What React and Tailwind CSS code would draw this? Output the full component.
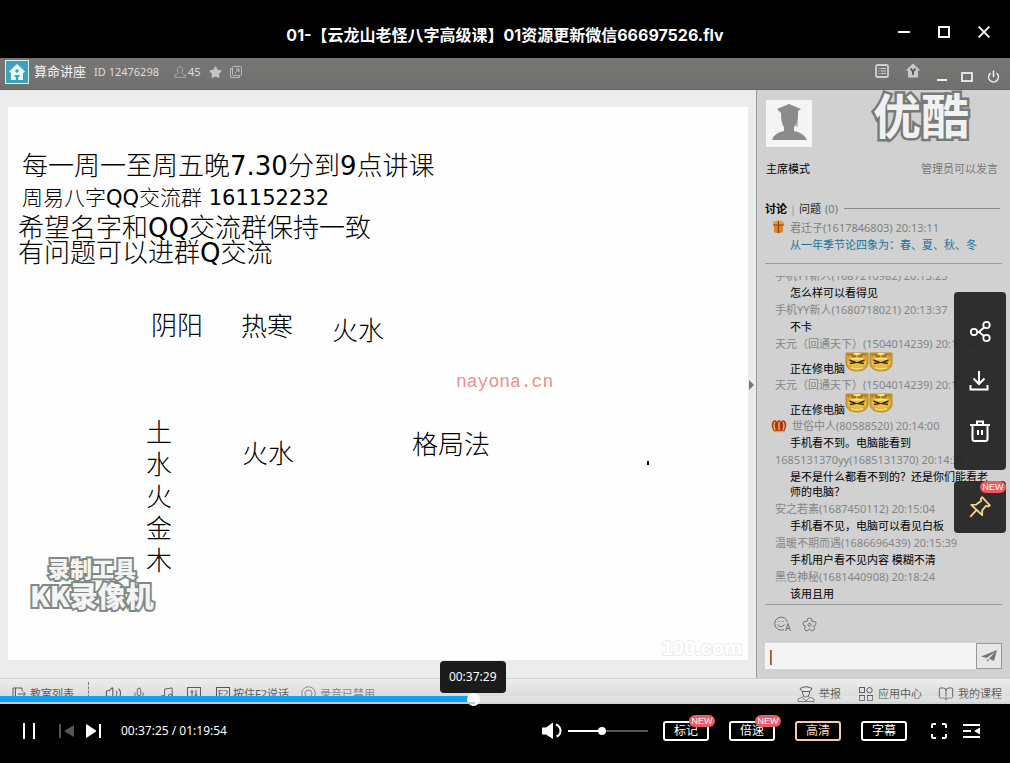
import React from 'react';
import { Minus, Power, Volume2, Mic, Music, Star, BookOpen } from 'lucide-react';

const cjk = "font-['Noto_Sans','Noto_Sans_CJK_SC',sans-serif]";

const notes = [
  { text: '每一周一至周五晚7.30分到9点讲课', cls: 'left-[14px] top-[43px] text-[26px]' },
  { text: '周易八字QQ交流群 161152232', cls: 'left-[14px] top-[75px] text-[21px]' },
  { text: '希望名字和QQ交流群保持一致', cls: 'left-[10px] top-[105px] text-[26px]' },
  { text: '有问题可以进群Q交流', cls: 'left-[10px] top-[130px] text-[26px]' },
  { text: '阴阳', cls: 'left-[143px] top-[203px] text-[26px]' },
  { text: '热寒', cls: 'left-[233px] top-[204px] text-[26px]' },
  { text: '火水', cls: 'left-[324px] top-[208px] text-[26px]' },
  { text: '火水', cls: 'left-[234px] top-[331px] text-[26px]' },
  { text: '格局法', cls: 'left-[404px] top-[322px] text-[26px]' },
];

const messages = [
  { name: '手机YY新人(1687210982) 20:13:23', text: '怎么样可以看得见' },
  { name: '手机YY新人(1680718021) 20:13:37', text: '不卡' },
  { name: '天元（回通天下）(1504014239) 20:13:42', text: '正在修电脑', faces: 2 },
  { name: '天元（回通天下）(1504014239) 20:13:52', text: '正在修电脑', faces: 2 },
  { name: '世俗中人(80588520) 20:14:00', text: '手机看不到。电脑能看到', crown: true },
  { name: '1685131370yy(1685131370) 20:14:38', text: '是不是什么都看不到的？还是你们能看老师的电脑？' },
  { name: '安之若素(1687450112) 20:15:04', text: '手机看不见，电脑可以看见白板' },
  { name: '温暖不期而遇(1686696439) 20:15:39', text: '手机用户看不见内容 模糊不清' },
  { name: '黑色神秘(1681440908) 20:18:24', text: '该用且用' },
];

function Face() {
  return (
    <svg width="24" height="20" viewBox="0 0 24 20" className="shrink-0">
      <path d="M1 1 H23 V12 Q21.500 19 12 19 Q2.500 19 1 12 Z" fill="#d9a22c" stroke="#b98a2c" />
      <path d="M1.500 1.500 H6 L3 5 Z M22.500 1.500 H18 L21 5 Z" fill="#b88426" />
      <path d="M6 2 L9 5 L12 3 L15 5 L18 2" stroke="#8a5e16" strokeWidth="1.400" fill="none" />
      <path d="M8 1 H16 L12 4 Z" fill="#fbe98a" />
      <ellipse cx="12" cy="10.500" rx="9.500" ry="5" fill="#e9bd45" />
      <path d="M4 6.500 Q12 4.500 20 6.500 L18 8 L12 7.500 L6 8 Z" fill="#f8e07c" />
      <path d="M4.500 8 L10.500 10.500 L5 11.500 M19.500 8 L13.500 10.500 L19 11.500" stroke="#3a280b" strokeWidth="1.500" fill="none" />
      <path d="M6 15.500 Q12 18 18 15.500" fill="none" stroke="#f6dc78" strokeWidth="1.800" />
    </svg>
  );
}

function Crown() {
  return (
    <svg width="16" height="14" viewBox="0 0 16 14" className="mr-[5px] shrink-0">
      <path d="M3 13 Q-1 6 2 2 Q5 0 6 3 Q8 -1 10 3 Q11 0 14 2 Q17 6 13 13 Z" fill="#b3321c" />
      <path d="M4 11 Q2 6 4 3 M8 11 V3 M12 11 Q14 6 12 3" stroke="#f2c15a" strokeWidth="1.3" fill="none" />
      <path d="M3 12.5 H13" stroke="#e8a13c" strokeWidth="1.5" />
    </svg>
  );
}

function Message({ m }) {
  return (
    <li>
      <p className="flex h-[17px] items-center whitespace-nowrap text-[#858585]">
        {m.crown && <span className="-ml-1"><Crown /></span>}
        {m.name}
      </p>
      {m.faces ? (
        <p className="flex h-6 items-end pl-[15px] text-black">
          <span className="leading-[15px]">{m.text}</span>
          <span className="flex self-start">{Array.from({ length: m.faces }, (_, i) => <Face key={i} />)}</span>
        </p>
      ) : (
        <p className="w-[215px] py-px pl-[15px] leading-[15px] text-black">{m.text}</p>
      )}
    </li>
  );
}

function NewBadge({ className }) {
  return (
    <span className={`absolute flex h-3 w-[26px] items-center justify-center rounded-full bg-[#ee5a60] font-['Liberation_Sans',sans-serif] text-[9px] leading-none text-white ${className}`}>
      NEW
    </span>
  );
}

function TitleBar() {
  return (
    <header className="relative flex h-[58px] items-center justify-center pt-3 text-white">
      <h1 className="font-['Inter','Noto_Sans_CJK_SC',sans-serif] text-base font-bold">01-【云龙山老怪八字高级课】01资源更新微信66697526.flv</h1>
      <div className="absolute right-4 top-[22px] flex gap-5">
        <button aria-label="最小化" className="flex size-5 items-center justify-center"><Minus size={18} strokeWidth={2.6} /></button>
        <button aria-label="最大化" className="flex size-5 items-center justify-center">
          <svg width="12" height="12" viewBox="0 0 12 12"><rect x="1" y="1" width="10" height="10" fill="none" stroke="currentColor" strokeWidth="2" /></svg>
        </button>
        <button aria-label="关闭" className="flex size-5 items-center justify-center">
          <svg width="12" height="12" viewBox="0 0 12 12"><path d="M0.7 0.7 L11.3 11.3 M11.3 0.7 L0.7 11.3" stroke="currentColor" strokeWidth="1.8" /></svg>
        </button>
      </div>
    </header>
  );
}

function RoomBar() {
  return (
    <div className="flex h-8 items-start justify-between border-b border-[#666] bg-linear-to-b from-[#797776] to-[#70706f] pl-[5px] pr-[10px] text-[#dcdcdc]">
      <div className="flex h-7 items-center text-[11px]">
        <span className="flex size-6 items-center justify-center border border-[#d3f0f5] bg-[#3fa3b8]">
          <svg width="18" height="18" viewBox="0 0 18 18"><path d="M9 1 L17 8.5 L15.5 10 L15 9.6 V17 H3 V9.6 L2.5 10 L1 8.5 Z" fill="#eefcff" /><circle cx="9" cy="8" r="1.8" fill="#3fa3b8" /><path d="M6.5 12 H11.5 V14 H10.2 V17 H7.8 V14 H6.5 Z" fill="#3fa3b8" /></svg>
        </span>
        <span className="ml-[5px] text-[13px] text-[#f3f3f3]">算命讲座</span>
        <span className="ml-2">ID 12476298</span>
        <svg className="ml-[15px] text-[#aaa]" width="12" height="12" viewBox="0 0 12 12" fill="none" stroke="currentColor"><path d="M4.5 6.5 Q3 5 3.3 3 Q4 .7 6 .7 Q8 .7 8.7 3 Q9 5 7.5 6.5 Q8 8 11.3 9 V11.3 H.7 V9 Q4 8 4.5 6.5 Z" /></svg>
        <span className="ml-[2px]">45</span>
        <Star className="ml-2 text-[#c4c4c4]" size={13} fill="currentColor" />
        <svg className="ml-2 text-[#bcbcbc]" width="12" height="12" viewBox="0 0 12 12" fill="none" stroke="currentColor"><rect x="2.5" y=".5" width="9" height="9" rx="1" /><path d="M2.5 2.5 H.5 V11.5 H9.5 V9.5 M5 7 L9 3 M6 3 H9 V6" /></svg>
      </div>
      <div className="flex h-[31px] items-center">
        <svg className="mb-[6px]" width="14" height="14" viewBox="0 0 14 14" fill="none" stroke="#d0d0d0"><rect x="1" y="1" width="12" height="12" rx="1.500" strokeWidth="1.8" /><path d="M5.500 4.5 H11 M5.500 7 H11 M5.500 9.5 H11 M3.500 4.500 H4.500 M3.500 7 H4.500 M3.500 9.500 H4.500" /></svg>
        <svg className="mb-[6px] ml-4" width="16" height="15" viewBox="0 0 16 15"><path d="M8 .5 L15.5 7.5 H13 V14.5 H3 V7.5 H.5 Z" fill="#c9c9c9" /><path d="M5.5 5.5 L8 8.5 L10.5 5.5 M8 8.5 V12" stroke="#555" strokeWidth="1.8" fill="none" /></svg>
        <svg className="ml-4 mt-[6px]" width="10" height="12" viewBox="0 0 10 12"><path d="M0 9 H10" stroke="#eee" strokeWidth="2" /></svg>
        <svg className="ml-[14px] mt-[6px]" width="12" height="10" viewBox="0 0 12 10"><rect x="1" y="1" width="10" height="8" fill="none" stroke="#eee" strokeWidth="1.8" /></svg>
        <Power className="ml-[14px] mt-[6px] text-[#eee]" size={13} strokeWidth={2.8} />
      </div>
    </div>
  );
}

function Note({ text }) {
  return text.split(/([\x21-\x7e]+)/).map((part, i) =>
    i % 2 ? <span key={i} className="font-normal">{part}</span> : part
  );
}

function Whiteboard() {
  return (
    <main className="relative flex flex-1 bg-[#ebecec] px-2 pb-[18px] pt-[17px]">
      <div className="relative flex-1 overflow-hidden bg-[#fdfefd] font-['DejaVu_Sans','Noto_Sans_CJK_SC',sans-serif] font-light text-black">
        {notes.map((n, i) => (
          <p key={i} className={`absolute whitespace-nowrap leading-8 ${n.cls}`}><Note text={n.text} /></p>
        ))}
        <p className="absolute left-[138px] top-[310px] w-[26px] text-[26px] leading-8">土水火金木</p>
        <p className="absolute left-[448px] top-[263px] font-['Liberation_Mono',monospace] text-lg leading-6 text-[#ee8f8f]">nayona.cn</p>
        <span className="absolute left-[639px] top-[354px] h-1 w-[2px] bg-black" />
        <div className="absolute left-[22px] top-[446px] font-['Noto_Sans_CJK_SC',sans-serif] font-black text-[#f4f4f4] [-webkit-text-stroke:4px_#818985] [paint-order:stroke_fill]">
          <p className="pl-[18px] text-[22px] leading-7">录制工具</p>
          <p className="text-[28px] leading-7">KK录像机</p>
        </div>
        <p className="absolute bottom-0 right-[6px] font-['Liberation_Sans',sans-serif] text-xl font-bold leading-6 text-white [-webkit-text-stroke:2px_#ececec] [paint-order:stroke_fill]">100.com</p>
      </div>
      <svg className="absolute right-[2px] top-[290px]" width="5" height="10" viewBox="0 0 5 10"><path d="M0 0 L5 5 L0 10 Z" fill="#777" /></svg>
    </main>
  );
}

function ChatPanel() {
  return (
    <aside className="flex w-[254px] shrink-0 flex-col border-l border-[#999b99] bg-[#d0d1d0] px-2 text-[11px] leading-[17px]">
      <div className="flex items-start justify-between pl-px pr-[33px] pt-[10px]">
        <svg width="46" height="47" viewBox="0 0 46 47"><rect width="46" height="47" fill="#f4f4f4" /><path d="M23 4 L35 9 L32 11 V16 Q31 25 28 27 V31 Q38 33 41 40 H6 Q8 33 18 31 V27 Q15 24 15 13 L11 9 Z" fill="#8b8b8b" /><path d="M31 10 V27" stroke="#8b8b8b" /></svg>
        <p className="-mt-[11px] font-['Noto_Sans_CJK_SC',sans-serif] text-5xl font-bold leading-[48px] text-[#f1f1f1] [-webkit-text-stroke:5px_#77797a] [paint-order:stroke_fill]">优酷</p>
      </div>
      <div className="mt-[13px] flex justify-between pl-px pr-1">
        <span className="text-black">主席模式</span>
        <span className="text-[#777]">管理员可以发言</span>
      </div>
      <div className="mt-[23px] flex items-center">
        <b className="text-black">讨论</b>
        <span className="mx-[3px] text-[#999]">|</span>
        <span className="text-[#222]">问题</span>
        <span className="ml-1 text-[#777]">(0)</span>
        <hr className="ml-[6px] mr-[2px] flex-1 border-[#8a8a8a]" />
      </div>
      <div className="mt-[2px] flex border-b border-[#9b9b9b] pb-[10px] pl-[6px]">
        <svg className="mr-1" width="15" height="15" viewBox="0 0 15 15"><path d="M3 5 H12 V13 Q7 15.5 3 13 Z" fill="#dd8428" /><path d="M2 3 Q7.5 0 13 3 V6 H2 Z" fill="#e99b38" /><path d="M7.5 2 V14 M2 6 H13" stroke="#8b3d12" strokeWidth="1.2" /></svg>
        <div>
          <p className="text-[#808080]">君迁子(1617846803) 20:13:11</p>
          <p className="text-[#17739c]">从一年季节论四象为：春、夏、秋、冬</p>
        </div>
      </div>
      <div className="mt-3 flex-1 overflow-hidden">
        <ul className="-mt-[9px] pl-[10px]">
          {messages.map((m, i) => <Message key={i} m={m} />)}
        </ul>
      </div>
      <div className="flex gap-[10px] border-t border-[#999] pb-[11px] pl-[9px] pt-[11px] text-[#6f6f6f]">
        <button aria-label="表情">
          <svg width="18" height="16" viewBox="0 0 18 16" fill="none" stroke="currentColor"><path d="M10 13.5 A6.5 6.5 0 1 1 13.5 6" /><path d="M3.5 8.5 Q7 13 10.5 8.5 M5 5 V6 M9 5 V6" /><path d="M11.5 15 L14 7.5 L16.5 15 M12.3 12.5 H15.7" /></svg>
        </button>
        <button aria-label="送花">
          <svg width="15" height="15" viewBox="0 0 15 15" fill="none" stroke="currentColor"><path d="M5 4.5 Q4.5 1 7.5 1 Q10.5 1 10 4.5 Q13.5 3.5 14 6 Q14.5 8.5 11.5 9.3 Q13.5 12 11.5 13.5 Q9.5 14.5 7.5 12 Q5.500 14.5 3.5 13.5 Q1.500 12 3.500 9.3 Q.5 8.500 1 6 Q1.500 3.500 5 4.500 Z" /><circle cx="7.5" cy="7.800" r="1.500" /></svg>
        </button>
      </div>
      <div className="mb-[9px] flex h-[26px]">
        <input aria-label="发言内容" defaultValue="|" className="min-w-0 flex-1 bg-[#f3f4f3] pl-[2px] text-sm text-black outline-none" />
        <button aria-label="发送" className="flex w-[26px] items-center justify-center border border-[#999] bg-[#e6e7e6]">
          <svg width="16" height="13" viewBox="0 0 16 13"><path d="M0 6.500 L16 0 L13 11 L8 8.800 L14 2 L5.500 8 Z M6 9 L8 10 L6.500 12 Z" fill="#777" /></svg>
        </button>
      </div>
    </aside>
  );
}

function ToolStrip() {
  return (
    <div className="flex h-[26px] items-center justify-between border-t border-[#cfcfcf] bg-linear-to-b from-[#ededed] to-[#d3d4d4] pl-3 pr-2 pt-1 text-[11px] leading-4 text-[#5d5d5d]">
      <div className="flex items-center">
        <svg width="14" height="14" viewBox="0 0 14 14" fill="none" stroke="currentColor"><path d="M10 4 V1 H1 V13 H10 V10 M3.500 1 V13 M6 7 H13 M11 4.500 L13.500 7 L11 9.500" /></svg>
        <span className="ml-1">教室列表</span>
        <span className="-mt-2 ml-[14px] h-4 border-l border-dashed border-[#777]" />
        <Volume2 className="ml-4" size={17} strokeWidth={1.5} />
        <Mic className="ml-[10px]" size={14} strokeWidth={1.5} />
        <Music className="ml-[13px]" size={15} strokeWidth={1.5} />
        <svg className="ml-[13px]" width="14" height="14" viewBox="0 0 14 14" fill="none" stroke="currentColor"><rect x=".5" y=".5" width="13" height="13" /><path d="M5 3 V11 M9 3 V11 M3.500 5 H6.500 M7.500 8 H10.500" /></svg>
        <span className="ml-[15px] flex size-[14px] items-center justify-center border border-[#555] font-['Liberation_Serif',serif] text-[10px] leading-none">F2</span>
        <span className="ml-[3px]">按住F2说话</span>
        <svg className="ml-3" width="15" height="15" viewBox="0 0 15 15" fill="none" stroke="#888"><circle cx="7.500" cy="7.500" r="6.800" /><circle cx="7.500" cy="7.500" r="3.500" /></svg>
        <span className="ml-1 text-[#888]">录音已禁用</span>
      </div>
      <div className="flex items-center">
        <svg width="18" height="16" viewBox="0 0 18 16" fill="none" stroke="currentColor"><path d="M3 2.500 Q9 -1 15 2.500 L13 5.500 H5 Z M5.500 5.500 Q5 10 9 11 Q13 10 12.500 5.500 M7 10.500 L1 13 V15.500 H17 V13 L11 10.500 M6 12 L9 15 L12 12" /></svg>
        <span className="ml-1">举报</span>
        <svg className="ml-[18px]" width="14" height="14" viewBox="0 0 14 14" fill="none" stroke="currentColor"><rect x=".5" y=".5" width="5" height="5" /><circle cx="10.500" cy="3.200" r="2.700" /><rect x=".5" y="8.500" width="5" height="5" /><rect x="8.500" y="8.500" width="5" height="5" /></svg>
        <span className="ml-[5px]">应用中心</span>
        <BookOpen className="ml-4" size={16} strokeWidth={1.4} />
        <span className="ml-1">我的课程</span>
      </div>
    </div>
  );
}

function SideTools() {
  return (
    <div className="absolute right-1 top-[234px] flex flex-col gap-[11px] text-white">
      <div className="flex h-[178px] w-[52px] flex-col items-center justify-center gap-[26px] rounded bg-[#252525]/95">
        <button aria-label="分享">
          <svg width="24" height="24" viewBox="0 0 24 24" fill="none" stroke="currentColor" strokeWidth="1.800"><circle cx="6" cy="13" r="3.200" /><circle cx="18.500" cy="6" r="3.200" /><circle cx="18.500" cy="19" r="3.200" /><path d="M9.300 13 H11 L16 8.500 M11 13 L16 17" /></svg>
        </button>
        <button aria-label="下载">
          <svg width="24" height="24" viewBox="0 0 24 24" fill="none" stroke="currentColor" strokeWidth="2"><path d="M11 2 V15 M5.500 9.500 L11 15 L16.500 9.500 M2.500 16 V20.500 H19.500 V16" /></svg>
        </button>
        <button aria-label="删除">
          <svg width="24" height="24" viewBox="0 0 24 24" fill="none" stroke="currentColor" strokeWidth="2"><path d="M2 6 H22 M9 5.500 V2.500 H15 V5.500 M4.500 6 V20 Q4.500 22 6.500 22 H17.500 Q19.500 22 19.500 20 V6 M10 11 V16 M14 11 V16" /></svg>
        </button>
      </div>
      <div className="relative flex h-[52px] w-[52px] items-center justify-center rounded bg-[#252525]/95">
        <button aria-label="置顶" className="text-[#f3d48d]">
          <svg width="24" height="24" viewBox="0 0 22 22" fill="none" stroke="currentColor" strokeWidth="1.700" strokeLinejoin="round"><path d="M13 2 L20 9.500 L18.500 10.500 L16.500 10 L13 14 L13 18.500 L3 9 L7.500 8.800 L12 5.500 L11.800 3.500 Z M7.500 14 L2 20" /></svg>
        </button>
        <NewBadge className="right-0 top-0" />
      </div>
    </div>
  );
}

function ModeButton({ children, badge, active }) {
  return (
    <button className={`relative flex h-5 w-[46px] items-center justify-center rounded-[3px] border-2 text-xs leading-none ${active ? 'border-[#f5cda8] text-[#f9d9b8]' : 'border-white text-white'}`}>
      {children}
      {badge && <NewBadge className="-right-2 -top-2" />}
    </button>
  );
}

function Controls() {
  return (
    <footer className="flex h-[59px] items-center justify-between pb-[5px] pl-[23px] pr-[30px] text-white">
      <div className="flex items-center">
        <button aria-label="暂停"><svg width="12" height="16" viewBox="0 0 12 16"><path d="M1 0 V16 M11 0 V16" stroke="currentColor" strokeWidth="2" /></svg></button>
        <button aria-label="上一个" className="ml-6 text-[#555]"><svg width="15" height="14" viewBox="0 0 15 14" fill="currentColor"><path d="M0 0 H2 V14 H0 Z M15 1 V13 L5 7 Z" /></svg></button>
        <button aria-label="下一个" className="ml-3"><svg width="15" height="14" viewBox="0 0 15 14" fill="currentColor"><path d="M13 0 H15 V14 H13 Z M0 1 Q0 0 1 .5 L10 6.500 Q10.500 7 10 7.500 L1 13.500 Q0 14 0 13 Z" /></svg></button>
        <time className="ml-5 text-xs">00:37:25 / 01:19:54</time>
      </div>
      <div className="flex items-center">
        <button aria-label="音量">
          <svg width="20" height="18" viewBox="0 0 20 18" fill="currentColor"><path d="M0 5.500 H4 L11 0.500 V17 L4 12.500 H0 Z" /><path d="M14 2.500 Q18.500 4.500 18.500 9 Q18.500 13 14.500 14.500" fill="none" stroke="currentColor" strokeWidth="2" /></svg>
        </button>
        <input
          type="range"
          aria-label="音量大小"
          defaultValue="42"
          className="ml-[6px] h-[2px] w-20 appearance-none bg-linear-to-r from-white from-42% to-[#555] to-42% [&::-webkit-slider-thumb]:size-2 [&::-webkit-slider-thumb]:appearance-none [&::-webkit-slider-thumb]:rounded-full [&::-webkit-slider-thumb]:bg-white"
        />
        <div className="ml-[15px] flex gap-5">
          <ModeButton badge>标记</ModeButton>
          <ModeButton badge>倍速</ModeButton>
          <ModeButton active>高清</ModeButton>
          <ModeButton>字幕</ModeButton>
        </div>
        <button aria-label="全屏" className="ml-6"><svg width="16" height="16" viewBox="0 0 16 16" fill="none" stroke="currentColor" strokeWidth="2"><path d="M1 5 V2 Q1 1 2 1 H5 M11 1 H14 Q15 1 15 2 V5 M15 11 V14 Q15 15 14 15 H11 M5 15 H2 Q1 15 1 14 V11" /></svg></button>
        <button aria-label="播放列表" className="ml-4"><svg width="17" height="16" viewBox="0 0 17 16" fill="currentColor"><path d="M0 1 H17 V3 H0 Z M0 7 H8 V9 H0 Z M0 13 H17 V15 H0 Z M17 4.500 V11.500 L11 8 Z" /></svg></button>
      </div>
    </footer>
  );
}

export default function App() {
  return (
    <div className={`flex min-h-screen flex-col bg-black ${cjk}`}>
      <TitleBar />
      <section className="relative flex flex-1 flex-col">
        <RoomBar />
        <div className="flex flex-1">
          <Whiteboard />
          <ChatPanel />
        </div>
        <ToolStrip />
        <SideTools />
        <input
          type="range"
          aria-label="播放进度"
          defaultValue="2245"
          max="4794"
          className="absolute bottom-[2px] left-0 h-[6px] w-full appearance-none bg-linear-to-r from-[#139ef2] from-47% to-white/20 to-47% [&::-webkit-slider-thumb]:size-[13px] [&::-webkit-slider-thumb]:appearance-none [&::-webkit-slider-thumb]:rounded-full [&::-webkit-slider-thumb]:bg-white"
        />
        <span className="absolute bottom-0 left-0 h-[2px] w-[47%] bg-[#b4cfdf]" />
        <output className="absolute bottom-[11px] left-[47%] -ml-[35px] flex h-8 w-[66px] items-center justify-center rounded bg-[#1b1b1b] text-xs text-white">00:37:29</output>
      </section>
      <Controls />
    </div>
  );
}
